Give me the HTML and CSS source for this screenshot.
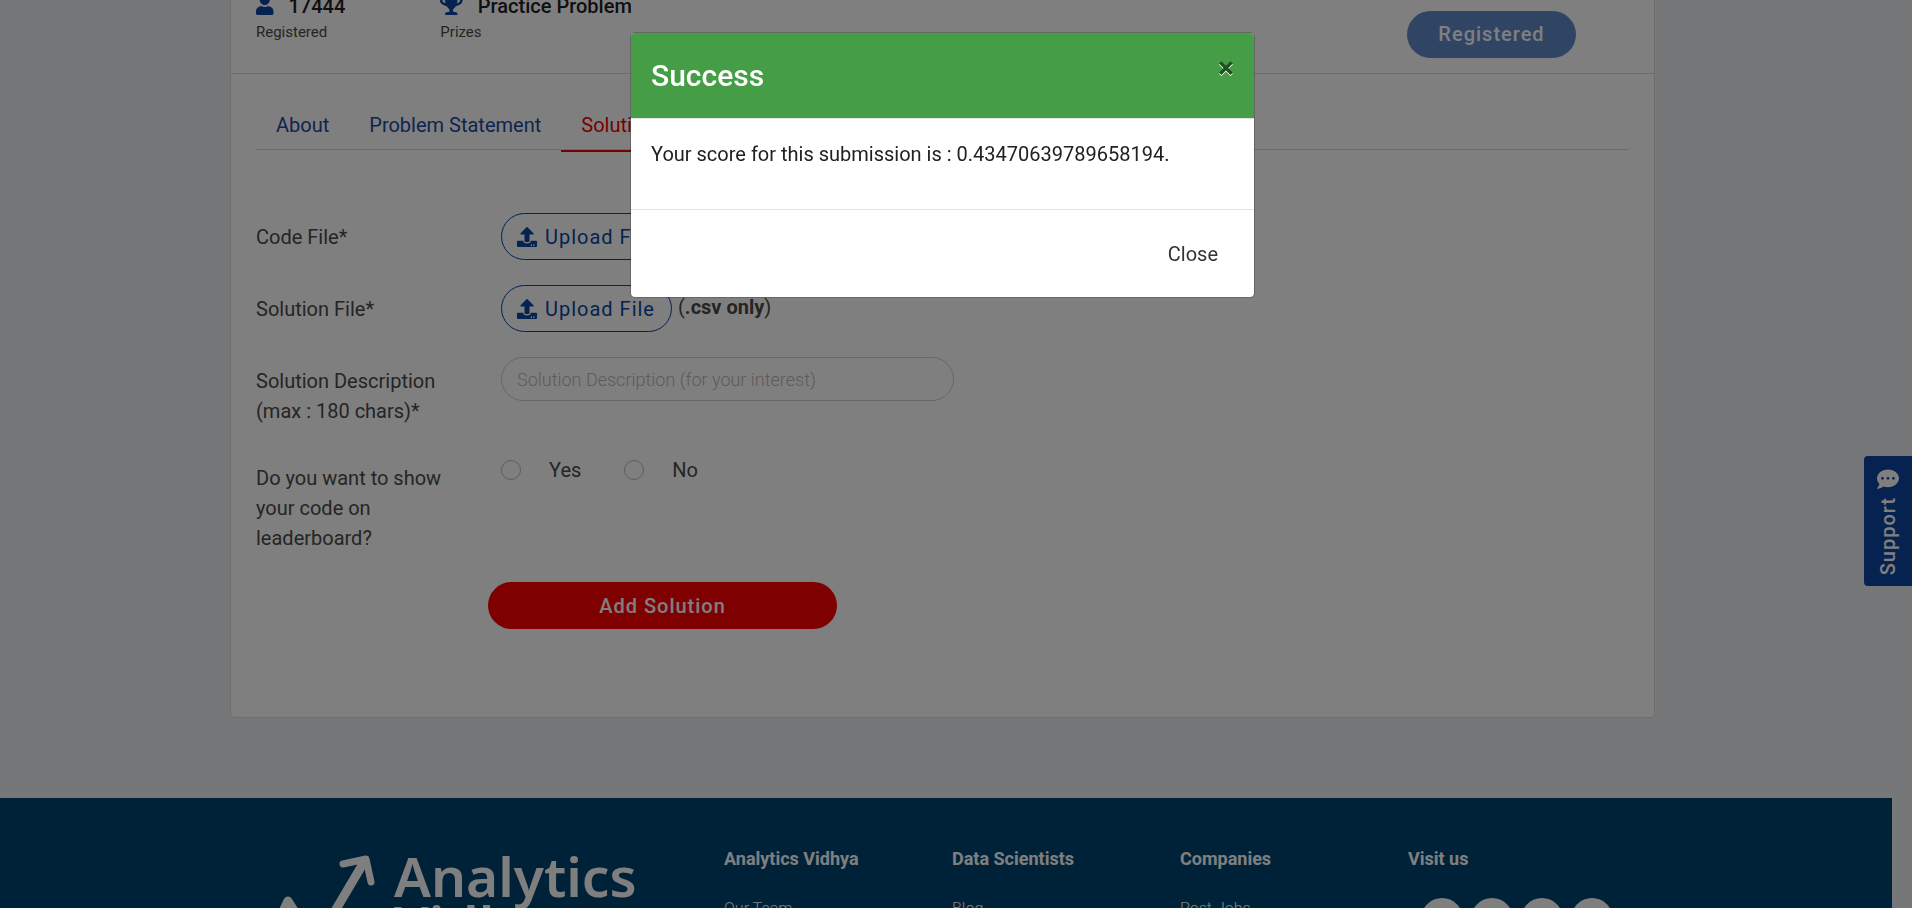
FILE: index.html
```html
<!DOCTYPE html>
<html lang="en">
<head>
<meta charset="utf-8">
<title>Practice Problem</title>
<link rel="stylesheet" href="styles.css">
</head>
<body>
<svg class="sprite" aria-hidden="true">
  <symbol id="upload" viewBox="0 0 512 512"><path d="M296 384h-80c-13.300 0-24-10.700-24-24V192h-87.700c-17.800 0-26.700-21.500-14.100-34.100L242.300 5.700c7.500-7.500 19.800-7.500 27.300 0l152.200 152.200c12.600 12.600 3.700 34.100-14.100 34.100H320v168c0 13.300-10.700 24-24 24zm216-8v112c0 13.300-10.700 24-24 24H24c-13.300 0-24-10.700-24-24V376c0-13.300 10.700-24 24-24h136v8c0 30.900 25.100 56 56 56h80c30.900 0 56-25.100 56-56v-8h136c13.300 0 24 10.700 24 24zm-124 88c0-11-9-20-20-20s-20 9-20 20 9 20 20 20 20-9 20-20zm64 0c0-11-9-20-20-20s-20 9-20 20 9 20 20 20 20-9 20-20z"/></symbol>
</svg>

<div class="page">
  <main class="card">
    <header class="summary">
      <dl class="stats">
        <div class="stat">
          <dd>
            <svg class="icon-user" viewBox="0 0 448 512" aria-hidden="true"><path d="M224 256c70.700 0 128-57.300 128-128S294.700 0 224 0 96 57.300 96 128s57.300 128 128 128zm89.600 32h-16.700c-22.200 10.200-46.900 16-72.900 16s-50.600-5.800-72.900-16h-16.700C60.200 288 0 348.200 0 422.400V464c0 26.500 21.500 48 48 48h352c26.500 0 48-21.500 48-48v-41.600c0-74.200-60.200-134.400-134.400-134.400z"/></svg>
            <span>17444</span>
          </dd>
          <dt>Registered</dt>
        </div>
        <div class="stat">
          <dd>
            <svg class="icon-trophy" viewBox="0 0 576 512" aria-hidden="true"><path d="M552 64H448V24c0-13.300-10.700-24-24-24H152c-13.300 0-24 10.700-24 24v40H24C10.700 64 0 74.700 0 88v56c0 35.700 22.500 72.400 61.900 100.700 31.500 22.700 69.800 37.100 110 41.700C203.300 338.500 240 360 240 360v72h-48c-35.300 0-64 20.700-64 56v12c0 6.600 5.400 12 12 12h296c6.600 0 12-5.400 12-12v-12c0-35.300-28.700-56-64-56h-48v-72s36.700-21.500 68.100-73.600c40.300-4.600 78.600-19 110-41.700 39.300-28.300 61.900-65 61.900-100.700V88c0-13.300-10.700-24-24-24zM99.300 192.800C74.900 175.200 64 155.600 64 144v-16h64.200c1 32.600 5.800 61.200 12.800 86.200-15.100-5.200-29.200-12.400-41.700-21.400zM512 144c0 16.100-17.700 36.100-35.300 48.800-12.500 9-26.700 16.200-41.800 21.400 7-25 11.800-53.600 12.800-86.200H512v16z"/></svg>
            <span>Practice Problem</span>
          </dd>
          <dt>Prizes</dt>
        </div>
      </dl>
      <button class="btn btn-registered" type="button">Registered</button>
    </header>

    <nav class="tabs">
      <a href="#about">About</a>
      <a href="#problem">Problem Statement</a>
      <a class="active" href="#solution">Solution Checker</a>
    </nav>

    <form class="form">
      <div class="row">
        <label for="code-upload">Code File*</label>
        <div class="field"><button class="btn btn-upload" id="code-upload" type="button"><svg aria-hidden="true"><use href="#upload"/></svg>Upload File</button></div>
      </div>
      <div class="row">
        <label for="solution-upload">Solution File*</label>
        <div class="field"><button class="btn btn-upload" id="solution-upload" type="button"><svg aria-hidden="true"><use href="#upload"/></svg>Upload File</button><span class="hint">(<b>.csv only</b>)</span></div>
      </div>
      <div class="row">
        <label for="description">Solution Description (max : 180 chars)*</label>
        <div class="field"><input class="text" id="description" type="text" maxlength="180" placeholder="Solution Description (for your interest)"></div>
      </div>
      <div class="row" role="radiogroup" aria-labelledby="show-label">
        <span class="row-label" id="show-label">Do you want to show your code on leaderboard?</span>
        <div class="field choices">
          <label><input type="radio" name="show" value="yes">Yes</label>
          <label><input type="radio" name="show" value="no">No</label>
        </div>
      </div>
      <button class="btn btn-submit" type="submit">Add Solution</button>
    </form>
  </main>

  <footer class="footer">
    <div class="footer-inner">
      <a class="logo" href="#home">
        <svg viewBox="0 0 120 110" aria-hidden="true"><path class="shaft" d="M4 84L18 55L36 84L52 87L94 16"/><path class="head" d="M73 18L96 13L101 36"/></svg>
        <span>Analytics<br>Vidhya</span>
      </a>
      <section><h2>Analytics Vidhya</h2><a href="#team">Our Team</a></section>
      <section><h2>Data Scientists</h2><a href="#blog">Blog</a></section>
      <section><h2>Companies</h2><a href="#jobs">Post Jobs</a></section>
      <section><h2>Visit us</h2>
        <div class="social"><a href="#facebook" aria-label="Facebook"></a><a href="#linkedin" aria-label="LinkedIn"></a><a href="#youtube" aria-label="YouTube"></a><a href="#twitter" aria-label="Twitter"></a></div>
      </section>
    </div>
  </footer>
</div>

<button class="support" type="button">
  <span>Support</span>
  <svg viewBox="0 0 512 512" aria-hidden="true"><path d="M256 32C114.600 32 0 125.100 0 240c0 49.600 21.400 95 57 130.700C44.500 421.100 2.700 466 2.200 466.500c-2.200 2.300-2.800 5.700-1.500 8.700S4.800 480 8 480c66.300 0 116-31.800 140.600-51.400 32.700 12.300 69 19.400 107.400 19.400 141.400 0 256-93.100 256-208S397.400 32 256 32zM128 272c-17.700 0-32-14.300-32-32s14.300-32 32-32 32 14.300 32 32-14.300 32-32 32zm128 0c-17.700 0-32-14.300-32-32s14.300-32 32-32 32 14.300 32 32-14.300 32-32 32zm128 0c-17.700 0-32-14.300-32-32s14.300-32 32-32 32 14.300 32 32-14.300 32-32 32z"/></svg>
</button>

<div class="backdrop">
  <div class="modal" role="dialog" aria-modal="true" aria-labelledby="modal-title">
    <div class="modal-header">
      <h1 id="modal-title">Success</h1>
      <button class="modal-x" type="button" aria-label="Dismiss">×</button>
    </div>
    <p class="modal-body">Your score for this submission is : 0.43470639789658194.</p>
    <div class="modal-footer"><button class="modal-close" type="button">Close</button></div>
  </div>
</div>
</body>
</html>
```

FILE: styles.css
```css
* {
  box-sizing: border-box;
}

html,
body {
  height: 100%;
}

body {
  margin: 0;
  overflow: hidden;
  background: #eceef2;
  color: #4a4a4a;
  font: 400 20px/30px Roboto, sans-serif;
}

a {
  text-decoration: none;
}

button,
input {
  font: inherit;
}

.sprite {
  display: none;
}

.page {
  height: 100%;
  padding-right: 20px;
  overflow: hidden;
}

.card {
  width: calc(100% - 467px);
  max-width: 1425px;
  margin-left: 230px;
  padding-bottom: 88px;
  background: #fff;
  border: 1px solid #dcdde0;
  border-top: 0;
  border-radius: 0 0 4px 4px;
}

.summary {
  display: flex;
  justify-content: space-between;
  height: 74px;
  padding: 0 78px 0 25px;
  border-bottom: 1px solid #d8d8da;
}

.stats {
  display: flex;
  gap: 95px;
  margin: -6px 0 0;
}

.stat {
  display: flex;
  flex-direction: column;
}

.stat dd {
  display: flex;
  gap: 15px;
  margin: 0;
  color: #212121;
  font-weight: 500;
  line-height: 24px;
}

.stat dt {
  padding-top: 4px;
  font-size: 15px;
  line-height: 20px;
}

.stat svg {
  height: 20px;
  margin-top: 1px;
  fill: #0b44a0;
}

.btn {
  height: 47px;
  border: 1px solid transparent;
  border-radius: 24px;
  letter-spacing: 1px;
}

.btn-registered {
  width: 169px;
  margin-top: 11px;
  padding-bottom: 2px;
  background: #6088c8;
  color: #fff;
  font-weight: 500;
}

.tabs {
  display: flex;
  height: 76px;
  margin: 0 25px;
  padding-top: 30px;
  border-bottom: 1px solid #d8d8da;
}

.tabs a {
  height: 48px;
  padding: 6px 20px;
  color: #1c4a9e;
}

.tabs .active {
  border-bottom: 2px solid #f00000;
  color: #f00000;
}

.form {
  padding: 63px 25px 0;
}

.row {
  display: flex;
  gap: 55px;
  min-height: 47px;
  margin-bottom: 25px;
}

.row > label,
.row-label {
  flex: 0 0 190px;
  padding: 9px 0 3px;
}

.field {
  display: flex;
  gap: 6px;
}

.btn-upload {
  display: flex;
  align-items: center;
  gap: 8px;
  padding: 0 16px 0 15px;
  background: none;
  border-color: #0b44a0;
  color: #0b44a0;
}

.btn-upload svg {
  width: 20px;
  height: 20px;
  fill: #0b44a0;
}

.hint {
  padding-top: 7px;
}

.hint b {
  font-weight: 700;
}

.text {
  width: 453px;
  height: 44px;
  padding: 0 15px;
  background: #fff;
  border: 1px solid #cfcfcf;
  border-radius: 22px;
  font-size: 18px;
  font-weight: 300;
}

.text::placeholder {
  color: #b8b8b8;
}

.choices {
  gap: 43px;
}

.choices label {
  display: flex;
  align-items: center;
  gap: 28px;
  height: 32px;
}

.choices input {
  appearance: none;
  width: 20px;
  height: 20px;
  margin: 0;
  border: 1px solid #b8bac0;
  border-radius: 50%;
}

.btn-submit {
  display: block;
  width: 349px;
  margin: 26px 0 0 232px;
  background: #fe0000;
  color: #fff;
  font-weight: 500;
}

.footer {
  height: 300px;
  margin-top: 80px;
  padding-top: 48px;
  background: #004472;
}

.footer-inner {
  display: grid;
  grid-template-columns: 454px repeat(4, 228px);
  padding-left: 270px;
}

.footer h2 {
  margin: 0 0 26px;
  color: #fff;
  font-size: 18px;
  font-weight: 700;
  line-height: 26px;
}

.footer section > a {
  display: block;
  color: #fff;
  font-size: 16px;
  font-weight: 300;
  line-height: 22px;
}

.logo {
  display: flex;
  gap: 4px;
  color: #fff;
  font: 600 55px/49px "Noto Sans", sans-serif;
}

.logo span {
  padding-top: 5px;
}

.logo svg {
  width: 120px;
  height: 110px;
  fill: none;
  stroke: #fff;
  stroke-linecap: round;
  stroke-linejoin: round;
}

.shaft {
  stroke-width: 9px;
}

.head {
  stroke-width: 7px;
}

.social {
  display: flex;
  gap: 8px;
  padding-left: 13px;
}

.social a {
  width: 42px;
  height: 42px;
  background: #fff;
  border-radius: 50%;
}

.support {
  position: fixed;
  top: 456px;
  right: 0;
  display: flex;
  flex-direction: column-reverse;
  align-items: center;
  gap: 7px;
  width: 48px;
  padding: 12px 0 11px;
  background: #0b44a0;
  border: 0;
  border-radius: 4px 0 0 4px;
  color: #fff;
  font-weight: 500;
  letter-spacing: 1px;
}

.support span {
  writing-mode: vertical-rl;
  transform: rotate(180deg);
}

.support svg {
  width: 22px;
  height: 22px;
  fill: #fff;
}

.backdrop {
  position: fixed;
  inset: 0;
  display: flex;
  align-items: flex-start;
  justify-content: center;
  padding: 32px 27px 0 0;
  background: rgba(0, 0, 0, 0.5);
}

.modal {
  width: 625px;
  background: #fff;
  background-clip: padding-box;
  border: 1px solid rgba(0, 0, 0, 0.2);
  border-radius: 5px;
  color: #212121;
  overflow: hidden;
}

.modal-header {
  display: flex;
  justify-content: space-between;
  height: 86px;
  padding: 20px;
  background: #459e46;
  border-bottom: 1px solid #e2e2e2;
}

.modal-header h1 {
  margin: 0;
  color: #fff;
  font-size: 30px;
  font-weight: 500;
  line-height: 45px;
}

.modal-x {
  height: 30px;
  padding: 0;
  background: none;
  border: 0;
  color: #225022;
  font-size: 30px;
  font-weight: 700;
  line-height: 30px;
  text-shadow: 0 1px 0 #fff;
}

.modal-body {
  margin: 0;
  padding: 20px 20px 40px;
}

.modal-footer {
  display: flex;
  justify-content: flex-end;
  padding: 20px 20px 20px 19px;
  border-top: 1px solid #e2e2e2;
}

.modal-close {
  height: 47px;
  padding: 0 16px;
  background: none;
  border: 0;
  color: #333;
}
```
